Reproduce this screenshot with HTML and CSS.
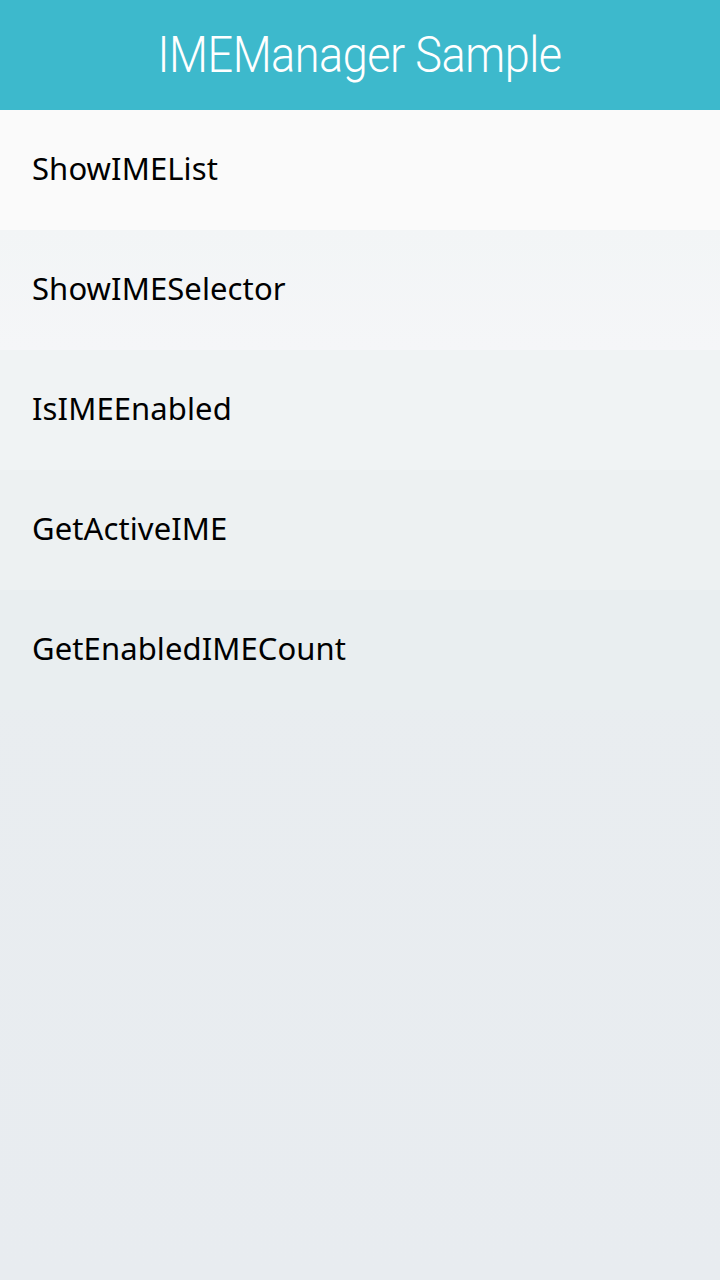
FILE: index.html
```html
<!DOCTYPE html>
<html>
<head>
<meta charset="utf-8">
<link rel="stylesheet" href="styles.css">
</head>
<body>
<header class="title-bar">
  <h1 class="title">IMEManager Sample</h1>
</header>
<ul class="menu">
  <li class="item item-1">ShowIMEList</li>
  <li class="item item-2">ShowIMESelector</li>
  <li class="item item-3">IsIMEEnabled</li>
  <li class="item item-4">GetActiveIME</li>
  <li class="item item-5">GetEnabledIMECount</li>
</ul>
</body>
</html>
```

FILE: styles.css
```css
html, body {
  margin: 0;
  padding: 0;
}
body {
  width: 720px;
  min-height: 1280px;
  background: linear-gradient(to bottom, #eaeef0 0px, #e8ecf0 1280px);
  font-family: "Noto Sans", "Open Sans", sans-serif;
}
.title-bar {
  height: 110px;
  background: #3db9cc;
  display: flex;
  align-items: center;
  justify-content: center;
}
.title {
  margin: 0;
  color: #ffffff;
  font-family: "Roboto", sans-serif;
  font-weight: 300;
  font-size: 50px;
  letter-spacing: -0.5px;
  transform: scaleX(0.9);
}
.menu {
  list-style: none;
  margin: 0;
  padding: 0;
}
.item {
  height: 120px;
  display: flex;
  align-items: center;
  padding-left: 32px;
  padding-bottom: 5px;
  box-sizing: border-box;
  font-size: 31px;
  letter-spacing: 0.1px;
  color: #000000;
}
.item-1 { background: #fafafa; }
.item-2 { background: linear-gradient(to bottom, #f2f5f6, #f5f6f8); }
.item-3 { background: #f0f3f4; }
.item-4 { background: #edf1f2; }
.item-5 { background: #e9eef0; }
```
